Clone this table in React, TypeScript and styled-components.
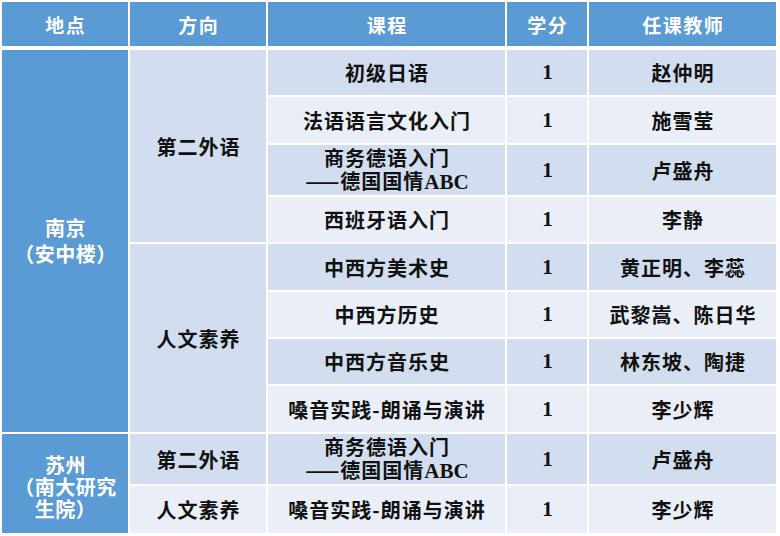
import React from 'react';
import styled, { createGlobalStyle } from 'styled-components';

const GlobalStyle = createGlobalStyle`
  html, body {
    margin: 0;
    padding: 0;
    background: #fff;
  }
`;

const cols = '126px 136px 237px 80px 187px';

const Page = styled.div`
  width: 780px;
  height: 536px;
  padding: 2px;
  box-sizing: border-box;
  background: #fff;
  font-family: "Noto Sans CJK SC", sans-serif;
  text-spacing-trim: space-all;
`;

const HeadRow = styled.div`
  display: grid;
  grid-template-columns: ${cols};
  grid-template-rows: 44px;
  column-gap: 2px;
  margin-bottom: 4px;
`;

const HeadCell = styled.div`
  display: flex;
  align-items: center;
  justify-content: center;
  background: #5b9bd5;
  color: #fff;
  font-weight: 700;
  font-size: 19px;
  letter-spacing: 1.5px;
  padding-left: 1.5px;
`;

const Body = styled.div`
  display: grid;
  grid-template-columns: ${cols};
  grid-template-rows: 45px 46px 50px 45px 46px 45px 45px 46px 50px 47px;
  gap: 2px;
`;

const Cell = styled.div<{ $row: number; $span?: number; $col: number; $shade: 'blue' | 'dark' | 'light' }>`
  grid-column: ${p => p.$col};
  grid-row: ${p => p.$row} / span ${p => p.$span ?? 1};
  display: flex;
  flex-direction: column;
  align-items: center;
  justify-content: center;
  text-align: center;
  font-weight: 700;
  font-size: 20px;
  line-height: 23px;
  letter-spacing: 1px;
  padding-left: 1px;
  background: ${p => (p.$shade === 'blue' ? '#5b9bd5' : p.$shade === 'dark' ? '#d2deef' : '#eaeff7')};
  color: ${p => (p.$shade === 'blue' ? '#fff' : '#111')};
`;

const PlaceText = styled.div<{ $lh: number; $drop?: number }>`
  line-height: ${p => p.$lh}px;
  letter-spacing: 0.5px;
  padding-top: ${p => p.$drop ?? 0}px;
`;

const Latin = styled.span`
  font-family: "Liberation Serif", "Times New Roman", serif;
  font-size: 21px;
  letter-spacing: 0;
`;

// wrap ascii runs (ABC, 1) in the serif face
const Mixed: React.FC<{ text: string }> = ({ text }) => (
  <>
    {text.split(/([A-Za-z0-9]+)/).map((part, i) =>
      /^[A-Za-z0-9]+$/.test(part) ? <Latin key={i}>{part}</Latin> : part
    )}
  </>
);

type Course = { name: string[]; teacher: string };

const courses: Course[] = [
  { name: ['初级日语'], teacher: '赵仲明' },
  { name: ['法语语言文化入门'], teacher: '施雪莹' },
  { name: ['商务德语入门', '——德国国情ABC'], teacher: '卢盛舟' },
  { name: ['西班牙语入门'], teacher: '李静' },
  { name: ['中西方美术史'], teacher: '黄正明、李蕊' },
  { name: ['中西方历史'], teacher: '武黎嵩、陈日华' },
  { name: ['中西方音乐史'], teacher: '林东坡、陶捷' },
  { name: ['嗓音实践-朗诵与演讲'], teacher: '李少辉' },
  { name: ['商务德语入门', '——德国国情ABC'], teacher: '卢盛舟' },
  { name: ['嗓音实践-朗诵与演讲'], teacher: '李少辉' },
];

const headers = ['地点', '方向', '课程', '学分', '任课教师'];

const App: React.FC = () => (
  <>
    <GlobalStyle />
    <Page>
      <HeadRow>
        {headers.map(h => (
          <HeadCell key={h}>{h}</HeadCell>
        ))}
      </HeadRow>
      <Body>
        <Cell $col={1} $row={1} $span={8} $shade="blue">
          <PlaceText $lh={26}>南京<br />（安中楼）</PlaceText>
        </Cell>
        <Cell $col={1} $row={9} $span={2} $shade="blue">
          <PlaceText $lh={22} $drop={7}>苏州<br />（南大研究<br />生院）</PlaceText>
        </Cell>

        <Cell $col={2} $row={1} $span={4} $shade="dark">第二外语</Cell>
        <Cell $col={2} $row={5} $span={4} $shade="dark">人文素养</Cell>
        <Cell $col={2} $row={9} $shade="dark">第二外语</Cell>
        <Cell $col={2} $row={10} $shade="light">人文素养</Cell>

        {courses.map((c, i) => {
          const shade = i % 2 === 0 ? 'dark' : 'light';
          return (
            <React.Fragment key={i}>
              <Cell $col={3} $row={i + 1} $shade={shade}>
                {c.name.map(line => (
                  <div key={line}><Mixed text={line} /></div>
                ))}
              </Cell>
              <Cell $col={4} $row={i + 1} $shade={shade}>
                <Latin>1</Latin>
              </Cell>
              <Cell $col={5} $row={i + 1} $shade={shade}>{c.teacher}</Cell>
            </React.Fragment>
          );
        })}
      </Body>
    </Page>
  </>
);

export default App;
